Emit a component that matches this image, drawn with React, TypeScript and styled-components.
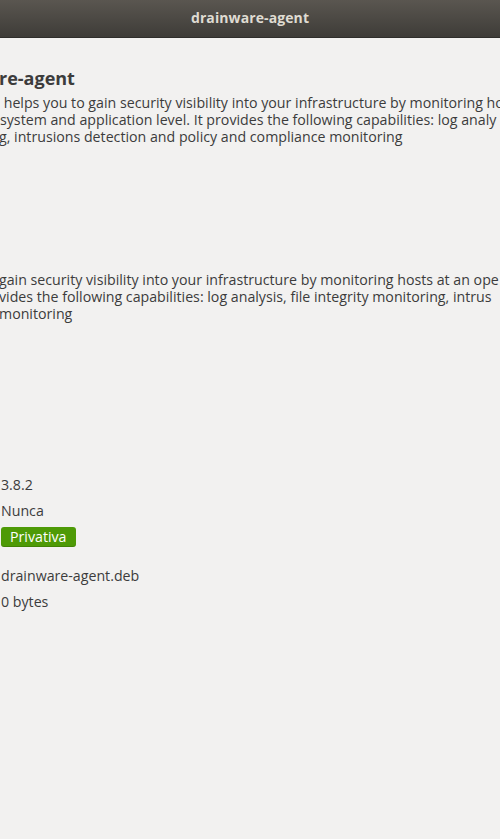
import React from 'react';
import styled, { createGlobalStyle } from 'styled-components';

const GlobalStyle = createGlobalStyle`
  html, body {
    margin: 0;
    padding: 0;
    background: #f2f1f0;
  }
  body {
    font-family: "Open Sans", "Noto Sans", sans-serif;
    color: #3c3c3c;
    overflow: hidden;
  }
`;

const summaryLines = [
  ' helps you to gain security visibility into your infrastructure by monitoring ho',
  'system and application level. It provides the following capabilities: log analy',
  'g, intrusions detection and policy and compliance monitoring',
];

const descriptionLines = [
  'gain security visibility into your infrastructure by monitoring hosts at an ope',
  'vides the following capabilities: log analysis, file integrity monitoring, intrus',
  'monitoring',
];

const App: React.FC = () => {
  return (
    <Window>
      <GlobalStyle />
      <HeaderBar>
        <HeaderTitle>drainware-agent</HeaderTitle>
      </HeaderBar>

      <Page>
        <AppTitle>re-agent</AppTitle>
        <Paragraph>
          {summaryLines.map((line, i) => (
            <Line key={i} shift={i === 2 ? -1 : 0}>{line}</Line>
          ))}
        </Paragraph>

        <Description>
          {descriptionLines.map((line, i) => (
            <Line key={i} shift={-1}>{line}</Line>
          ))}
        </Description>

        <Details>
          <DetailRow>3.8.2</DetailRow>
          <DetailRow>Nunca</DetailRow>
          <BadgeRow>
            <LicenseBadge>Privativa</LicenseBadge>
          </BadgeRow>
          <DetailRow>drainware-agent.deb</DetailRow>
          <DetailRow>0 bytes</DetailRow>
        </Details>
      </Page>
    </Window>
  );
};

const Window = styled.div`
  width: 500px;
  height: 839px;
  overflow: hidden;
  background: #f2f1f0;
`;

const HeaderBar = styled.div`
  height: 38px;
  display: flex;
  align-items: center;
  justify-content: center;
  background: linear-gradient(to bottom, #5a5650, #3e3c38);
  border-bottom: 1px solid #2f2e2b;
  box-sizing: border-box;
`;

const HeaderTitle = styled.div`
  color: #dfdbd2;
  font-size: 14px;
  font-weight: 700;
  letter-spacing: 0.1px;
  margin-top: -2px;
`;

const Page = styled.div`
  display: flex;
  flex-direction: column;
  padding-top: 29px;
  overflow: hidden;
`;

const AppTitle = styled.div`
  font-size: 18px;
  font-weight: 700;
  line-height: 22px;
  color: #3c3c3c;
  margin-left: -1px;
`;

const Paragraph = styled.div`
  display: flex;
  flex-direction: column;
  margin-top: 5px;
  font-size: 14.2px;
  line-height: 17px;
`;

const Description = styled(Paragraph)`
  margin-top: 126px;
`;

const Line = styled.div<{ shift: number }>`
  white-space: pre;
  margin-left: ${p => p.shift}px;
`;

const Details = styled.div`
  display: flex;
  flex-direction: column;
  margin-top: 150px;
  font-size: 14.2px;
`;

const DetailRow = styled.div`
  line-height: 26px;
  height: 26px;
  padding-left: 1px;
`;

const BadgeRow = styled.div`
  display: flex;
  height: 39px;
  align-items: flex-start;
  padding-top: 3px;
  box-sizing: border-box;
`;

const LicenseBadge = styled.span`
  display: inline-block;
  margin-left: 1px;
  padding: 0 9px;
  height: 20px;
  line-height: 20px;
  border-radius: 3px;
  background: #4e9a06;
  color: #ffffff;
  font-size: 14.2px;
  box-shadow: inset 0 -1px 0 rgba(0, 0, 0, 0.15);
`;

export default App;
